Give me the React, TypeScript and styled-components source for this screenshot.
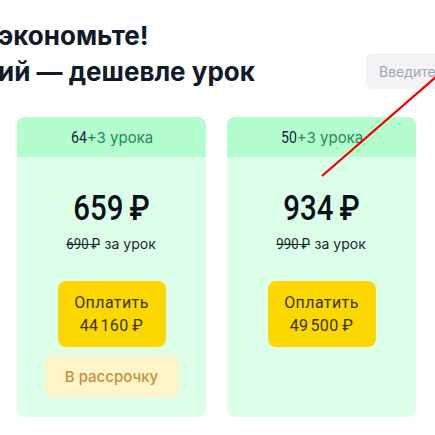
import styled, { createGlobalStyle } from 'styled-components';

const GlobalStyle = createGlobalStyle`
  html, body {
    margin: 0;
    padding: 0;
    background: #ffffff;
    overflow: hidden;
  }
  body {
    font-family: Inter, "Noto Sans", sans-serif;
    color: #0f1a2a;
  }
`;

const Page = styled.div`
  position: relative;
  width: 435px;
  height: 435px;
  overflow: hidden;
`;

const TopRow = styled.div`
  display: flex;
  align-items: flex-start;
  gap: 14px;
  padding-top: 18px;
  white-space: nowrap;
`;

const Heading = styled.h2`
  flex: none;
  width: 354px;
  margin: 0 0 0 -2px;
  font-size: 26px;
  line-height: 36px;
  font-weight: 700;
  color: #0f1a2a;
`;

const PromoInput = styled.input`
  flex: none;
  width: 180px;
  height: 36px;
  margin-top: 35px;
  padding: 0 13px;
  box-sizing: border-box;
  border: none;
  border-radius: 7px;
  background: #f2f3f5;
  font-family: Inter, sans-serif;
  font-size: 14px;
  outline: none;

  &::placeholder {
    color: #a0a6af;
  }
`;

const Cards = styled.div`
  display: flex;
  gap: 21px;
  margin: 27px 0 0 17px;
`;

const Card = styled.div`
  display: flex;
  flex-direction: column;
  align-items: center;
  width: 189px;
  height: 300px;
  border-radius: 8px;
  overflow: hidden;
  background: #dbffe8;
`;

const CardHead = styled.div`
  align-self: stretch;
  height: 40px;
  display: flex;
  align-items: center;
  justify-content: center;
  background: #b4fdcf;
  font-size: 15px;
  color: #1f8a57;
`;

/* narrow digits, like the site's condensed face */
const Narrow = styled.span<{ $squeeze?: number; $weight?: number }>`
  display: inline-block;
  font-family: Roboto, "Liberation Sans", sans-serif;
  font-weight: ${(p) => p.$weight ?? 500};
  transform: scaleX(${(p) => p.$squeeze ?? 0.88});
`;

const Count = styled(Narrow)`
  font-size: 16px;
  color: #16213a;
  margin-right: -1px;
`;

const Price = styled.div`
  margin-top: 30px;
  font-size: 35px;
  line-height: 40px;
  color: #0b0f1a;
`;

const PerLesson = styled.div`
  margin-top: 5px;
  font-size: 14px;
  line-height: 20px;
  color: #1a1f2b;
  display: flex;
  align-items: center;
  gap: 2px;
`;

const OldPrice = styled(Narrow)`
  font-size: 15px;
  text-decoration: line-through;
  margin-left: -3px;
`;

const PayButton = styled.button`
  margin-top: 27px;
  width: 108px;
  height: 66px;
  padding: 0;
  border: none;
  border-radius: 8px;
  background: #fcd800;
  font-family: Roboto, "Liberation Sans", sans-serif;
  font-weight: 400;
  font-size: 16px;
  letter-spacing: 0.4px;
  line-height: 23px;
  color: #3b3300;
  cursor: pointer;
`;

const InstallmentButton = styled.button`
  margin-top: 8px;
  width: 134px;
  height: 42px;
  padding: 0;
  border: none;
  border-radius: 8px;
  background: #fff5c8;
  font-family: Inter, sans-serif;
  font-weight: 500;
  font-size: 15px;
  color: #c98e3e;
  cursor: pointer;
`;

const Annotation = styled.svg`
  position: absolute;
  inset: 0;
  pointer-events: none;
`;

type Plan = {
  count: number;
  bonus: number;
  price: string;
  oldPrice: string;
  total: string;
  installment?: boolean;
};

const plans: Plan[] = [
  { count: 64, bonus: 3, price: '659', oldPrice: '690', total: '44\u200a160', installment: true },
  { count: 50, bonus: 3, price: '934', oldPrice: '990', total: '49\u200a500' },
];

function PlanCard({ count, bonus, price, oldPrice, total, installment }: Plan) {
  return (
    <Card>
      <CardHead>
        <Count $weight={400}>{count}</Count>+{bonus} урока
      </CardHead>
      <Price>
        <Narrow $squeeze={0.84}>{price}{'\u2009'}₽</Narrow>
      </Price>
      <PerLesson>
        <OldPrice $weight={400}>{oldPrice}{'\u2009'}₽</OldPrice>за урок
      </PerLesson>
      <PayButton>
        Оплатить
        <br />
        {total}{'\u2009'}₽
      </PayButton>
      {installment && <InstallmentButton>В рассрочку</InstallmentButton>}
    </Card>
  );
}

export default function App() {
  return (
    <Page>
      <GlobalStyle />
      <TopRow>
        <Heading>
          экономьте!
          <br />
          ий — дешевле урок
        </Heading>
        <PromoInput placeholder="Введите промокод" />
      </TopRow>
      <Cards>
        {plans.map((p) => (
          <PlanCard key={p.count} {...p} />
        ))}
      </Cards>
      <Annotation width="435" height="435" viewBox="0 0 435 435">
        <line x1="437" y1="76" x2="322" y2="176" stroke="#f20000" strokeWidth="2.2" />
      </Annotation>
    </Page>
  );
}
